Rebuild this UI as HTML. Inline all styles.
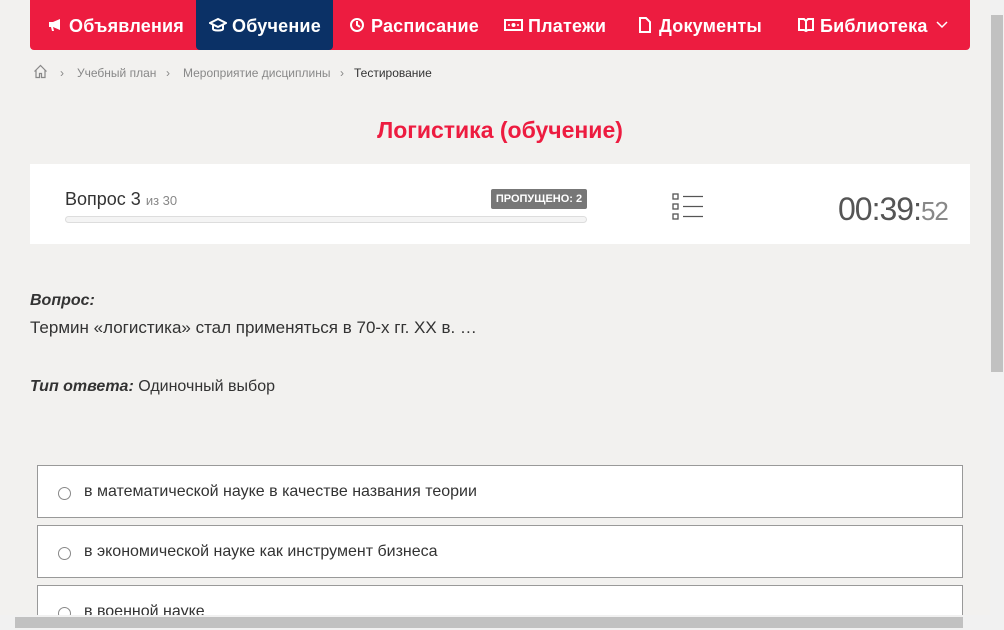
<!DOCTYPE html>
<html><head><meta charset="utf-8"><style>
*{box-sizing:border-box;margin:0;padding:0}
html,body{width:1004px;height:630px;overflow:hidden}
body{background:#f2f1ef;font-family:"Liberation Sans",sans-serif;position:relative}
.nav{position:absolute;left:30px;top:0;width:940px;height:50px;background:#ed1c40;border-radius:0 0 4px 4px}
.nav div{position:absolute;top:1px;height:50px;line-height:50px;color:#fff;font-size:18px;font-weight:bold;white-space:nowrap;letter-spacing:0.2px}
.nav svg{position:absolute;top:17px}
.nav .act{background:#0b3166;border-radius:0 0 4px 4px;top:0}
.bc{position:absolute;top:66px;font-size:12px;color:#888}
.a{position:absolute}
.opt{position:absolute;left:37px;width:926px;height:53px;background:#fff;border:1px solid #999}
.opt span.r{position:absolute;left:20px;top:21px;width:13px;height:13px;border:1px solid #888;border-radius:50%}
.opt span.t{position:absolute;left:46px;top:17px;font-size:16px;color:#333}
</style></head><body>
<div class="nav">
<svg style="left:17px" width="16" height="16" viewBox="0 0 16 16"><path d="M2 5h4l7-3v11l-7-3H2zM4 10l1 4h2l-1-4" fill="#fff"/></svg>
<div style="left:39px">Объявления</div>
<div class="act" style="left:166px;width:137px"></div>
<svg style="left:179px" width="18" height="16" viewBox="0 0 18 16"><path d="M9 2L1 6l8 4 8-4zM4 8v4c0 2 10 2 10 0V8" fill="none" stroke="#fff" stroke-width="2"/></svg>
<div style="left:202px">Обучение</div>
<svg style="left:319px" width="16" height="16" viewBox="0 0 16 16"><circle cx="8" cy="8" r="6" fill="none" stroke="#fff" stroke-width="2"/><path d="M8 4v4l3 2" fill="none" stroke="#fff" stroke-width="2"/></svg>
<div style="left:341px">Расписание</div>
<svg style="left:474px" width="19" height="16" viewBox="0 0 19 16"><rect x="1" y="3" width="17" height="10" fill="none" stroke="#fff" stroke-width="2"/><circle cx="9.5" cy="8" r="2" fill="#fff"/><circle cx="5" cy="8" r="1" fill="#fff"/><circle cx="14" cy="8" r="1" fill="#fff"/></svg>
<div style="left:498px">Платежи</div>
<svg style="left:608px" width="14" height="16" viewBox="0 0 14 16"><path d="M2 1h6l4 4v10H2z" fill="none" stroke="#fff" stroke-width="2"/></svg>
<div style="left:629px">Документы</div>
<svg style="left:768px" width="16" height="16" viewBox="0 0 16 16"><path d="M1 2h5l2 2 2-2h5v11h-5l-2 1-2-1H1zM8 4v10" fill="none" stroke="#fff" stroke-width="2"/></svg>
<div style="left:790px">Библиотека</div>
<svg style="left:906px;top:21px" width="12" height="8" viewBox="0 0 12 8"><path d="M1 1l5 5 5-5" fill="none" stroke="#fff" stroke-width="1.5"/></svg>
</div>
<svg class="a" style="left:33px;top:64px" width="15" height="15" viewBox="0 0 15 15"><path d="M1.5 7.5L7.5 1.5L13.5 7.5M3 6v7.5h3.5v-4h2v4H12V6" fill="none" stroke="#888" stroke-width="1.2"/></svg>
<div class="bc" style="left:60px">›</div>
<div class="bc" style="left:77px">Учебный план</div>
<div class="bc" style="left:166px">›</div>
<div class="bc" style="left:183px">Мероприятие дисциплины</div>
<div class="bc" style="left:340px">›</div>
<div class="bc" style="left:354px;color:#333">Тестирование</div>
<div class="a" style="left:0;width:1000px;top:117px;text-align:center;font-size:23px;color:#ed1c40;font-weight:bold">Логистика (обучение)</div>
<div class="a" style="left:30px;top:164px;width:940px;height:80px;background:#fff"></div>
<div class="a" style="left:65px;top:189px;font-size:18px;color:#333">Вопрос 3 <span style="font-size:13px;color:#888">из 30</span></div>
<div class="a" style="left:491px;top:189px;width:96px;height:20px;background:#777;color:#fff;font-size:11px;font-weight:bold;text-align:center;line-height:20px;border-radius:2px">ПРОПУЩЕНО: 2</div>
<div class="a" style="left:65px;top:216px;width:522px;height:7px;border:1px solid #ddd;border-radius:4px;background:#f4f4f4"></div>
<svg class="a" style="left:672px;top:193px" width="32" height="28"><g fill="none" stroke="#555" stroke-width="1.3"><rect x="1" y="1" width="5" height="5"/><rect x="1" y="11" width="5" height="5"/><rect x="1" y="21" width="5" height="5"/><path d="M11 3.5h20M11 13.5h20M11 23.5h20"/></g></svg>
<div class="a" style="left:838px;top:191px;font-size:32px;color:#555;letter-spacing:-1px">00:39:<span style="font-size:26px;color:#888">52</span></div>
<div class="a" style="left:30px;top:292px;font-size:16px;color:#333;font-weight:bold;font-style:italic">Вопрос:</div>
<div class="a" style="left:30px;top:318px;font-size:17px;color:#333">Термин «логистика» стал применяться в 70-х гг. XX в. …</div>
<div class="a" style="left:30px;top:378px;font-size:16px;color:#333"><b><i>Тип ответа:</i></b> Одиночный выбор</div>
<div class="opt" style="top:465px"><span class="r"></span><span class="t">в математической науке в качестве названия теории</span></div>
<div class="opt" style="top:525px"><span class="r"></span><span class="t">в экономической науке как инструмент бизнеса</span></div>
<div class="opt" style="top:585px;height:30px;border-bottom:none"><span class="r"></span><span class="t">в военной науке</span></div>
<div class="a" style="left:990px;top:0;width:14px;height:615px;background:#f1f1f1"></div>
<div class="a" style="left:991px;top:15px;width:12px;height:357px;background:#c1c1c1"></div>
<div class="a" style="left:0;top:615px;width:1004px;height:15px;background:#f1f1f1"></div>
<div class="a" style="left:15px;top:617px;width:948px;height:11px;background:#c1c1c1"></div>
</body></html>
